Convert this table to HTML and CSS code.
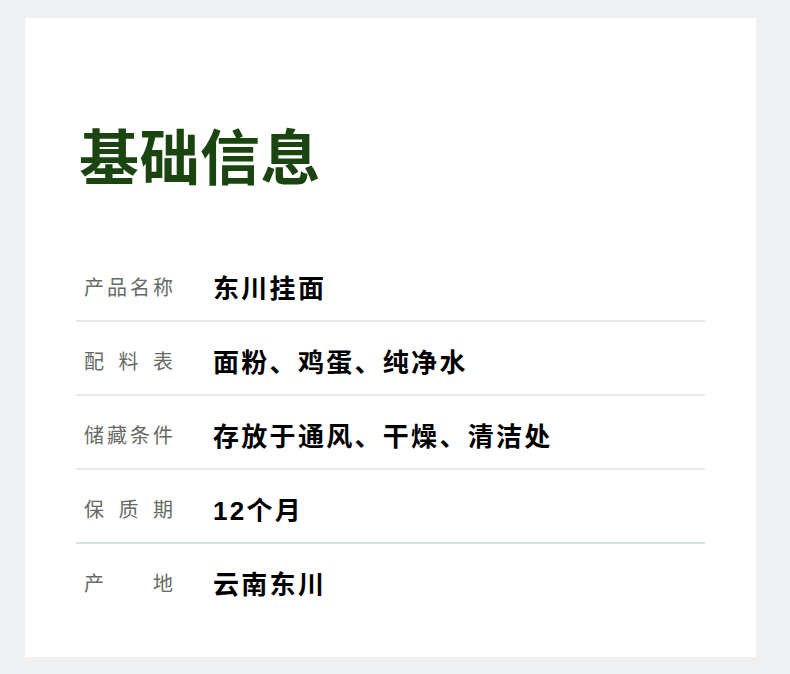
FILE: index.html
```html
<!DOCTYPE html>
<html lang="zh">
<head>
<meta charset="utf-8">
<link rel="stylesheet" href="styles.css">
</head>
<body>
<div class="card">
  <h1 class="title">基础信息</h1>
  <div class="rows">
    <div class="row"><span class="label">产品名称</span><span class="value">东川挂面</span></div>
    <div class="row"><span class="label">配料表</span><span class="value">面粉、鸡蛋、纯净水</span></div>
    <div class="row"><span class="label">储藏条件</span><span class="value">存放于通风、干燥、清洁处</span></div>
    <div class="row"><span class="label">保质期</span><span class="value">12个月</span></div>
    <div class="row last"><span class="label">产地</span><span class="value">云南东川</span></div>
  </div>
</div>
</body>
</html>
```
FILE: styles.css
```css
html, body {
  margin: 0;
  padding: 0;
}
body {
  background: #eff0f2;
  padding: 18px 0 0 25px;
  font-family: "Liberation Sans", "Noto Sans CJK SC", sans-serif;
}
.card {
  background: #ffffff;
  width: 731px;
  height: 639px;
  box-sizing: border-box;
  padding: 112px 0 0 51px;
}
.title {
  margin: 0 0 58px 3px;
  font-size: 60px;
  line-height: 60px;
  height: 60px;
  font-weight: 700;
  color: #1b4510;
  letter-spacing: 0.5px;
}
.rows {
  width: 629px;
  display: flex;
  flex-direction: column;
}
.row {
  height: 72px;
  box-sizing: content-box;
  display: flex;
  align-items: center;
  padding-top: 0;
  border-bottom: 2px solid #e3eae8;
}
.row.last {
  border-bottom: none;
}
.row:nth-child(4) {
  border-bottom-color: #d5e3df;
}
.label {
  width: 89px;
  margin-left: 8px;
  margin-right: 40px;
  margin-top: 4px;
  font-size: 20px;
  color: #656a64;
  text-align: justify;
  text-align-last: justify;
  font-family: "Noto Sans CJK SC", sans-serif;
}
.value {
  margin-top: 4px;
  font-size: 26px;
  font-weight: 700;
  color: #000;
  letter-spacing: 2.3px;
}
```
